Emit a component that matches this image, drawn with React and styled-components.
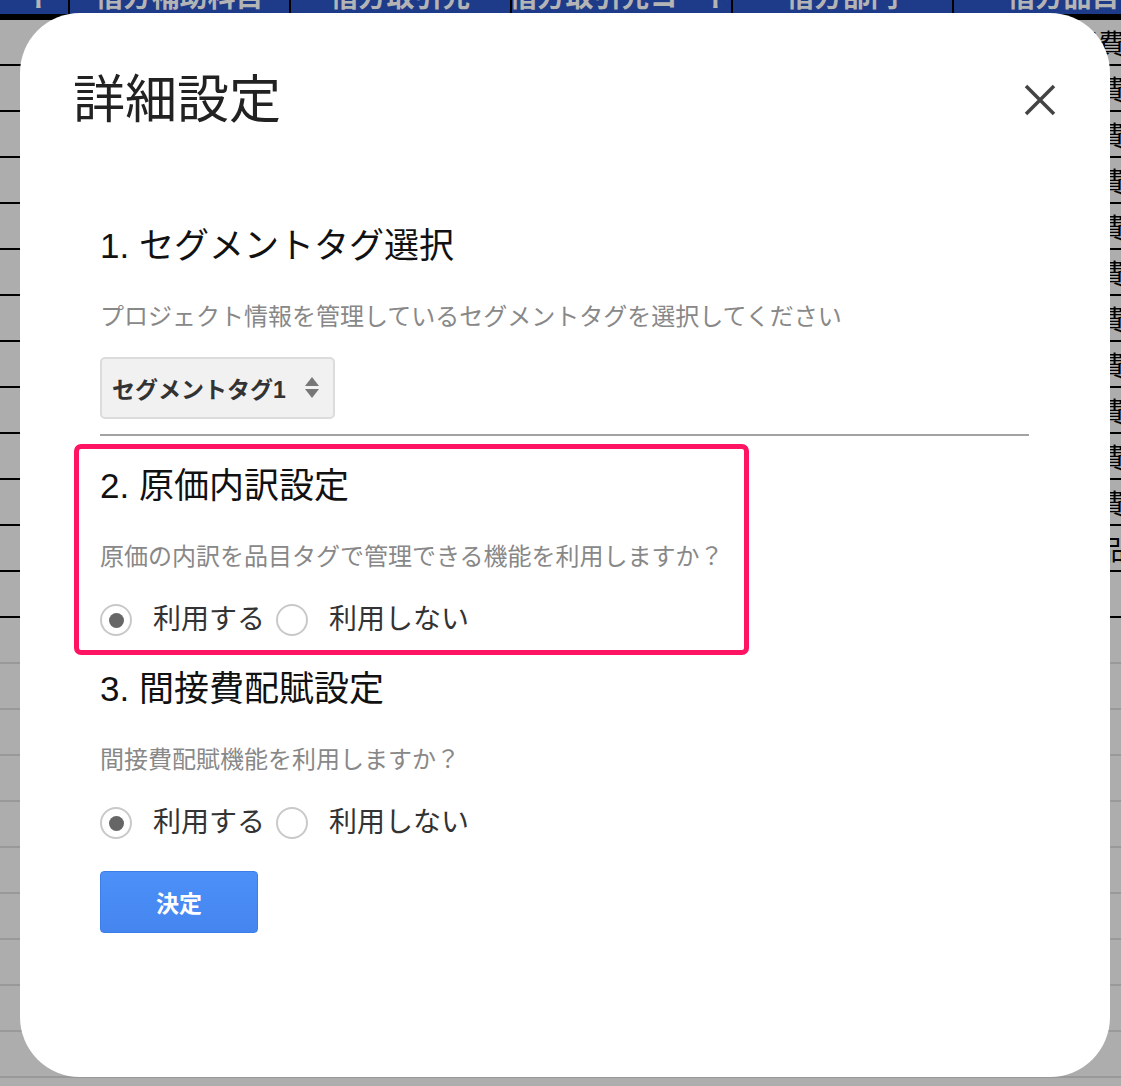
import styled, { createGlobalStyle } from "styled-components";

const GlobalStyle = createGlobalStyle`
  html, body {
    margin: 0;
    padding: 0;
  }
  body {
    background: #adadad;
    font-family: "Liberation Sans", "Noto Sans CJK JP", sans-serif;
    overflow: hidden;
  }
`;

const Page = styled.div`
  position: relative;
  width: 1121px;
  height: 1086px;
  overflow: hidden;
  background: #adadad;
`;

/* spreadsheet behind the dialog */
const Sheet = styled.div`
  margin-left: -151px;
  width: max-content;
`;

const HeaderRow = styled.div`
  display: flex;
  height: 14px;
  background: #1e3b8a;
  border-bottom: 6px solid #000;
`;

const HeaderCell = styled.div`
  width: 221px;
  flex-shrink: 0;
  box-sizing: border-box;
  border-right: 2px solid #000;
  display: flex;
  justify-content: center;
  align-items: flex-end;
  padding-bottom: 2px;
  overflow: hidden;
  white-space: nowrap;
  font-size: 28px;
  font-weight: 700;
  line-height: 28px;
  color: #b4b4b4;
`;

const Row = styled.div`
  display: flex;
  height: 46px;
  box-sizing: border-box;
  border-bottom: 2px solid ${(p) => (p.$empty ? "#999" : "#000")};
`;

const Cell = styled.div`
  width: 221px;
  flex-shrink: 0;
  box-sizing: border-box;
  border-right: 2px solid ${(p) => (p.$empty ? "#999" : "#000")};
  display: flex;
  align-items: center;
  justify-content: flex-end;
  padding-right: 48px;
  overflow: hidden;
  white-space: nowrap;
  font-size: 27px;
  color: #000;
`;

/* dialog */
const Modal = styled.div`
  position: absolute;
  top: 13px;
  left: 20px;
  width: 1090px;
  height: 1064px;
  box-sizing: border-box;
  background: #fff;
  border-radius: 60px;
  padding: 55px 54px 0 53px;
`;

const TitleBar = styled.div`
  display: flex;
  align-items: center;
  justify-content: space-between;
`;

const Title = styled.h1`
  margin: 0;
  font-size: 52px;
  line-height: 64px;
  font-weight: 400;
  color: #222;
`;

const CloseButton = styled.button`
  width: 32px;
  height: 32px;
  padding: 0;
  border: none;
  background: none;
  cursor: pointer;
  display: flex;
`;

const Body = styled.div`
  margin-top: 92px;
  padding: 0 27px;
`;

const Section = styled.section`
  ${(p) =>
    p.$divided &&
    `
    padding-bottom: 15px;
    border-bottom: 2px solid #a3a3a3;
  `}
  ${(p) =>
    p.$highlighted &&
    `
    width: fit-content;
    margin: 8px 0 0 -26px;
    padding: 15px 20px 12px 21px;
    border: 5px solid #ff1464;
    border-radius: 7px;
  `}
  ${(p) => p.$spaced && `margin-top: 12px;`}
`;

const Heading = styled.h2`
  margin: 0;
  font-size: 35px;
  line-height: 44px;
  font-weight: 400;
  color: #111;
`;

const Desc = styled.p`
  margin: 33px 0 0;
  font-size: 24px;
  line-height: 32px;
  color: #888;
`;

const SelectBox = styled.div`
  margin-top: 24px;
  width: 235px;
  height: 62px;
  box-sizing: border-box;
  display: flex;
  align-items: center;
  justify-content: space-between;
  padding: 0 13px 0 10px;
  background: #f1f1f1;
  border: 2px solid #dcdcdc;
  border-radius: 5px;
  font-size: 23px;
  font-weight: 700;
  color: #333;
`;

const RadioGroup = styled.div`
  margin-top: 29px;
  height: 36px;
  display: flex;
  align-items: center;
  gap: 11px;
`;

const RadioItem = styled.label`
  display: flex;
  align-items: center;
  gap: 21px;
  font-size: 28px;
  line-height: 36px;
  color: #333;
`;

const RadioCircle = styled.span`
  width: 32px;
  height: 32px;
  box-sizing: border-box;
  border: 2px solid #c9c9c9;
  border-radius: 50%;
  display: flex;
  align-items: center;
  justify-content: center;

  &::after {
    content: "";
    width: 15px;
    height: 15px;
    border-radius: 50%;
    background: ${(p) => (p.$checked ? "#666" : "transparent")};
  }
`;

const SubmitButton = styled.button`
  margin-top: 30px;
  width: 158px;
  height: 62px;
  border: 1px solid #3b7ee8;
  border-radius: 4px;
  background: linear-gradient(#4c90f8, #4585ef);
  color: #fff;
  font-family: inherit;
  font-size: 23px;
  font-weight: 700;
  cursor: pointer;
`;

const headers = [
  "借方科目コード",
  "借方補助科目",
  "借方取引先",
  "借方取引先コード",
  "借方部門",
  "借方品目",
];

const items = [
  "旅費交通費",
  "消耗品費",
  "通信費",
  "外注費",
  "通信費",
  "消耗品費",
  "旅費交通費",
  "外注費",
  "通信費",
  "消耗品費",
  "外注費",
  "商品",
  "",
];

const SortArrows = () => (
  <svg width="16" height="26" viewBox="0 0 16 26">
    <path d="M8 2 L15 11 H1 Z" fill="#777" />
    <path d="M1 14 H15 L8 23 Z" fill="#777" />
  </svg>
);

const CloseIcon = () => (
  <svg width="32" height="32" viewBox="0 0 32 32">
    <path d="M2 2 L30 30 M30 2 L2 30" stroke="#444" strokeWidth="3.5" />
  </svg>
);

const YesNo = ({ value }) => (
  <RadioGroup>
    <RadioItem>
      <RadioCircle $checked={value} />
      利用する
    </RadioItem>
    <RadioItem>
      <RadioCircle $checked={!value} />
      利用しない
    </RadioItem>
  </RadioGroup>
);

const App = () => {
  return (
    <Page>
      <GlobalStyle />
      <Sheet>
        <HeaderRow>
          {headers.map((h) => (
            <HeaderCell key={h}>{h}</HeaderCell>
          ))}
        </HeaderRow>
        {items.map((item, i) => (
          <Row key={i}>
            {headers.map((h, j) => (
              <Cell key={h}>{j === headers.length - 1 ? item : ""}</Cell>
            ))}
          </Row>
        ))}
        {Array.from({ length: 10 }).map((_, i) => (
          <Row $empty key={`e${i}`}>
            {headers.map((h) => (
              <Cell $empty key={h} />
            ))}
          </Row>
        ))}
      </Sheet>

      <Modal>
        <TitleBar>
          <Title>詳細設定</Title>
          <CloseButton aria-label="閉じる">
            <CloseIcon />
          </CloseButton>
        </TitleBar>

        <Body>
          <Section $divided>
            <Heading>1. セグメントタグ選択</Heading>
            <Desc>プロジェクト情報を管理しているセグメントタグを選択してください</Desc>
            <SelectBox>
              セグメントタグ1
              <SortArrows />
            </SelectBox>
          </Section>

          <Section $highlighted>
            <Heading>2. 原価内訳設定</Heading>
            <Desc>原価の内訳を品目タグで管理できる機能を利用しますか？</Desc>
            <YesNo value={true} />
          </Section>

          <Section $spaced>
            <Heading>3. 間接費配賦設定</Heading>
            <Desc>間接費配賦機能を利用しますか？</Desc>
            <YesNo value={true} />
          </Section>

          <SubmitButton>決定</SubmitButton>
        </Body>
      </Modal>
    </Page>
  );
};

export default App;
